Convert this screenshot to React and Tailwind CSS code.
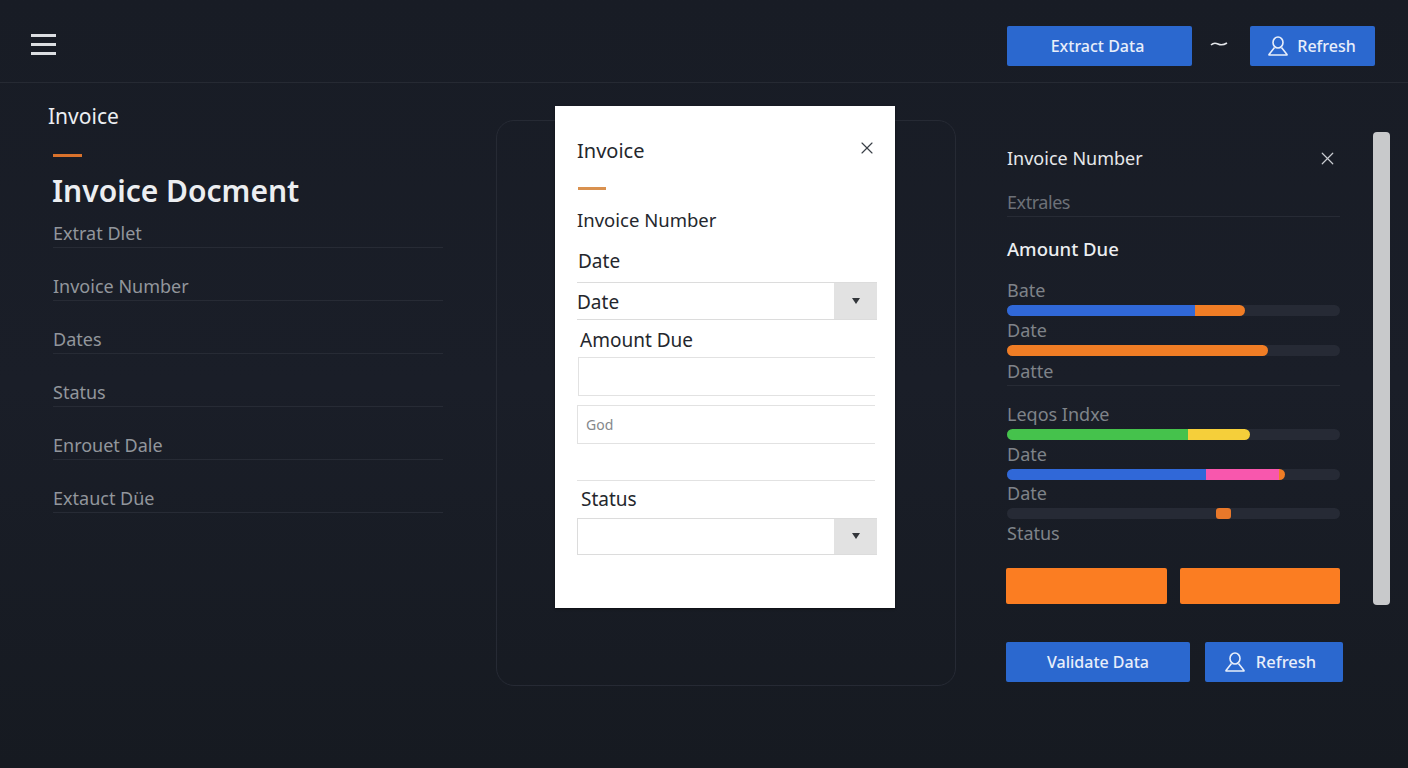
import React from "react";
import { X } from "lucide-react";

const leftRows = ["Extrat Dlet", "Invoice Number", "Dates", "Status", "Enrouet Dale", "Extauct Düe"];

const UserIcon = ({ className }) => (
  <svg viewBox="0 0 22 20" fill="none" stroke="currentColor" strokeWidth="1.6" className={className}>
    <ellipse cx="11" cy="6.5" rx="5" ry="5.5" />
    <path d="M7.5 11.5 L2 18.5 Q1.8 19 2.5 19 H19.5 Q20.2 19 20 18.5 L14.5 11.5" strokeLinejoin="round" />
  </svg>
);

const BlueButton = ({ className, children }) => (
  <button className={`flex items-center justify-center rounded-[2px] bg-[#2b68cf] font-medium text-[#e8eefa] ${className}`}>
    {children}
  </button>
);

const Bar = ({ children }) => (
  <div className="flex h-[11px] overflow-hidden rounded-full bg-[#262a35]">{children}</div>
);

const Select = ({ value, className }) => (
  <div className={`flex items-stretch border-y border-[#dcdcdc] ${className}`}>
    <div className="flex-1 text-[19px] leading-[38px] text-[#24272d]">{value}</div>
    <div className="flex w-[43px] items-center justify-center bg-[#e2e2e2]">
      <div className="h-0 w-0 border-x-[4px] border-t-[6px] border-x-transparent border-t-[#33363b]" />
    </div>
  </div>
);

export default function App() {
  return (
    <div className="flex h-screen flex-col overflow-hidden bg-gradient-to-b from-[#181c25] via-[#1a1e28] to-[#161a21] font-['Noto_Sans','Open_Sans',sans-serif]">
      {/* top bar */}
      <header className="flex h-[83px] shrink-0 items-center border-b border-[#262a33] pl-[31px] pr-[33px] pt-[9px]">
        <div className="mb-[2px] flex w-[25px] flex-col gap-[6.5px]">
          <div className="h-[2.5px] bg-[#dcdee2]" />
          <div className="h-[2.5px] bg-[#dcdee2]" />
          <div className="h-[2.5px] bg-[#dcdee2]" />
        </div>
        <div className="ml-auto flex items-center">
          <BlueButton className="h-[40px] w-[185px] pr-[4px] text-[16px]">Extract Data</BlueButton>
          <svg viewBox="0 0 18 6" className="mb-[3px] ml-[18px] mr-[22px] w-[18px] text-[#e4e6ea]" fill="none" stroke="currentColor" strokeWidth="1.6">
            <path d="M1 4 Q4 1 8 3 T17 2" />
          </svg>
          <BlueButton className="h-[40px] w-[125px] gap-[8px] pr-[2px] text-[16px]">
            <UserIcon className="h-[20px] w-[22px]" />
            Refresh
          </BlueButton>
        </div>
      </header>

      <main className="flex flex-1">
        {/* left column */}
        <section className="w-[496px] shrink-0 pl-[48px] pr-[53px] pt-[19px]">
          <div className="text-[21px] leading-[28px] text-[#eceef1]">Invoice</div>
          <div className="ml-[5px] mt-[24px] h-[3px] w-[29px] bg-[#d9722c]" />
          <h1 className="ml-[4px] mt-[14px] text-[30px] font-semibold leading-[40px] text-[#eceef1]">Invoice Docment</h1>
          <div className="ml-[5px]">
            {leftRows.map((row, i) => (
              <div
                key={row}
                className={`flex items-end border-b border-[#272b35] pb-[1px] text-[18px] leading-[26px] text-[#92969c] ${i === 0 ? "h-[37px]" : "h-[53px]"}`}
              >
                {row}
              </div>
            ))}
          </div>
        </section>

        {/* center panel with dialog */}
        <section className="relative mt-[37px] h-[566px] w-[460px] shrink-0 rounded-[18px] border border-[#262a34]">
          <div className="absolute left-[58px] top-[-15px] flex h-[502px] w-[340px] flex-col bg-white pl-[22px] pr-[18px] pt-[32px] text-[#24272d] shadow-[0_1px_2px_rgba(0,0,0,0.5)]">
            <div className="flex h-[26px] items-center justify-between">
              <span className="text-[20px]">Invoice</span>
              <X className="mb-[6px] h-[20px] w-[20px] text-[#3a4048]" strokeWidth={1.4} />
            </div>
            <div className="ml-[1px] mt-[23px] h-[2.5px] w-[28px] bg-[#d9914f]" />
            <div className="mt-[16px] text-[18.5px] leading-[28px]">Invoice Number</div>
            <div className="ml-[1px] mt-[13px] text-[19px] leading-[28px]">Date</div>
            <Select value="Date" className="mt-[7px] h-[38px]" />
            <div className="ml-[3px] mt-[6px] text-[19px] leading-[28px]">Amount Due</div>
            <div className="ml-[1px] mr-[2px] mt-[3px] h-[39px] border-y border-l border-[#e2e2e2]" />
            <div className="mr-[2px] mt-[9px] h-[39px] border-y border-l border-[#e2e2e2] pl-[8px] text-[14px] leading-[37px] text-[#85888c]">
              God
            </div>
            <div className="mr-[2px] mt-[36px] border-t border-[#e2e2e2]" />
            <div className="ml-[4px] mt-[4px] text-[19px] leading-[28px]">Status</div>
            <Select value="" className="mt-[5px] h-[37px] border-l" />
          </div>
        </section>

        {/* right column */}
        <section className="ml-[51px] w-[337px] shrink-0 pt-[61px]">
          <div className="w-[333px]">
            <div className="flex h-[28px] items-center justify-between pr-[2px] text-[18px] text-[#e6e8eb]">
              Invoice Number
              <X className="h-[21px] w-[21px] text-[#c9ccd1]" strokeWidth={1.4} />
            </div>
            <div className="mt-[17px] border-b border-[#272b35] pb-[1px] text-[18px] leading-[26px] tracking-tight text-[#6d7178]">Extrales</div>
            <div className="mt-[19px] text-[18.5px] font-medium leading-[26px] text-[#eceef1]">Amount Due</div>
            <div className="mb-[3px] mt-[16px] text-[18px] leading-[24px] text-[#7f8389]">Bate</div>
            <Bar>
              <div className="w-[188px] bg-[#3068d8]" />
              <div className="w-[50px] rounded-r-full bg-[#f07d25]" />
            </Bar>
            <div className="mb-[2px] mt-[1px] text-[18px] leading-[26px] text-[#7f8389]">Date</div>
            <Bar>
              <div className="w-[261px] rounded-r-full bg-[#f07d25]" />
            </Bar>
            <div className="mt-[2px] border-b border-[#272b35] pb-[1px] text-[18px] leading-[26px] text-[#7f8389]">Datte</div>
            <div className="mb-[2px] mt-[15px] text-[18px] leading-[26px] text-[#7f8389]">Leqos Indxe</div>
            <Bar>
              <div className="w-[181px] bg-[#45c24c]" />
              <div className="w-[62px] rounded-r-full bg-[#f5cf3a]" />
            </Bar>
            <div className="mb-[2px] mt-[1px] text-[18px] leading-[26px] text-[#7f8389]">Date</div>
            <Bar>
              <div className="w-[199px] bg-[#3068d8]" />
              <div className="w-[73px] bg-[#f857ad]" />
              <div className="w-[6px] rounded-r-full bg-[#f07d25]" />
            </Bar>
            <div className="mb-[2px] text-[18px] leading-[26px] text-[#7f8389]">Date</div>
            <Bar>
              <div className="ml-[209px] w-[15px] rounded-[3px] bg-[#e8782a]" />
            </Bar>
            <div className="mt-[1px] text-[18px] leading-[26px] text-[#7f8389]">Status</div>
            <div className="-ml-[1px] mt-[22px] flex gap-[13px]">
              <div className="h-[36px] w-[161px] rounded-[2px] bg-[#fb7d22]" />
              <div className="h-[36px] w-[160px] rounded-[2px] bg-[#fb7d22]" />
            </div>
            <div className="-ml-[1px] mt-[38px] flex w-[338px] gap-[15px]">
              <BlueButton className="h-[40px] w-[184px] text-[16px]">Validate Data</BlueButton>
              <BlueButton className="h-[40px] w-[138px] gap-[10px] pr-[8px] text-[16.5px]">
                <UserIcon className="h-[20px] w-[22px]" />
                Refresh
              </BlueButton>
            </div>
          </div>
        </section>

        {/* scrollbar */}
        <div className="ml-[29px] mt-[49px] h-[473px] w-[17px] shrink-0 rounded-[4px] bg-[#c8c9cb]" />
      </main>
    </div>
  );
}
